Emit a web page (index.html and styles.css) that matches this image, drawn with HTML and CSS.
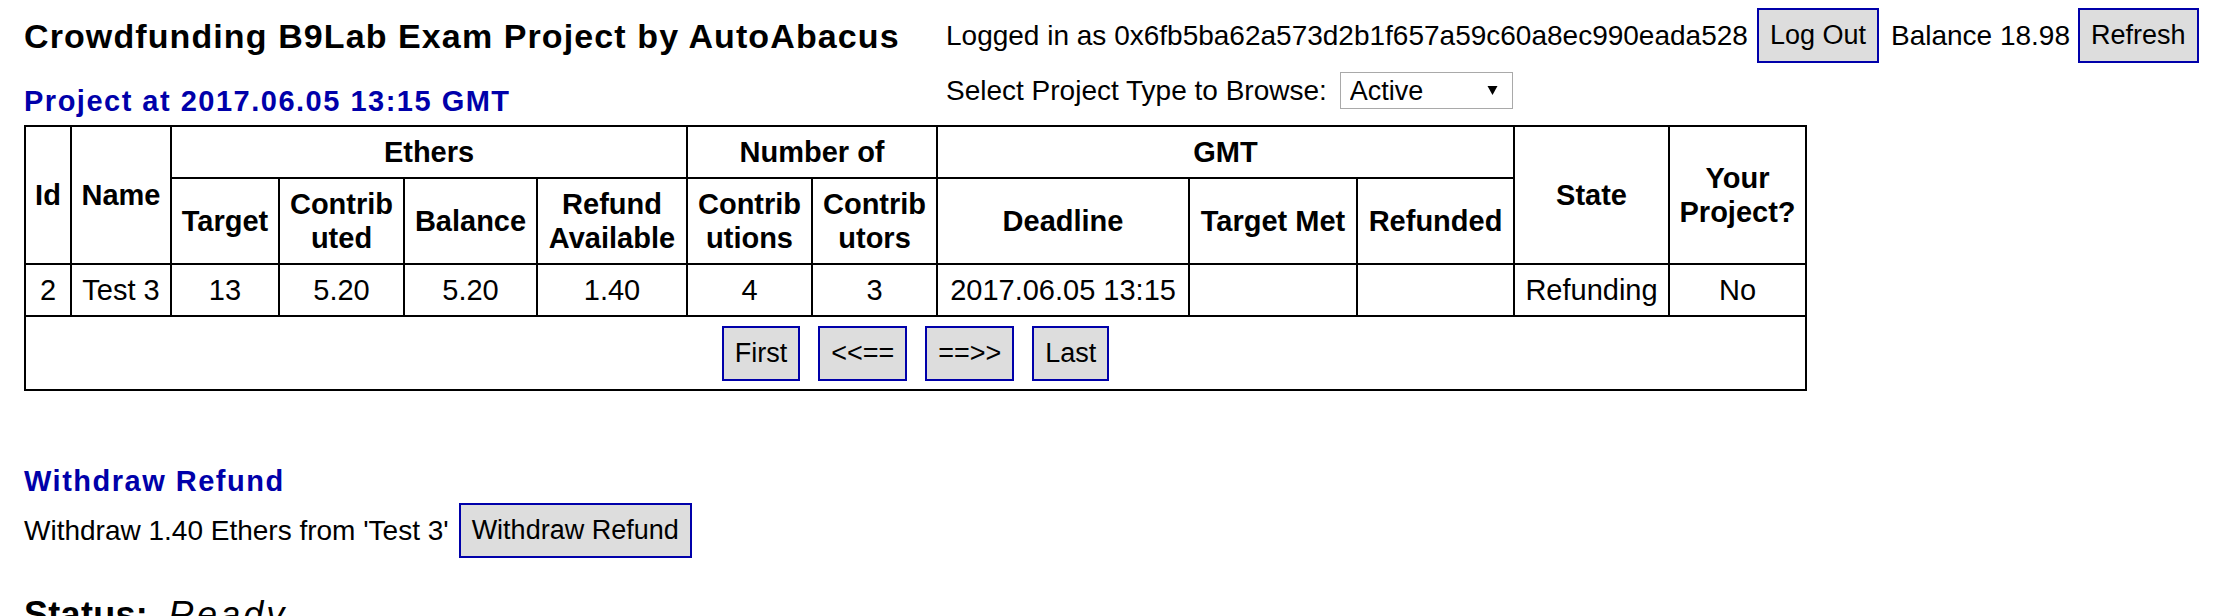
FILE: index.html
```html
<!DOCTYPE html>
<html lang="en">
<head>
<meta charset="utf-8">
<title>Crowdfunding B9Lab Exam Project by AutoAbacus</title>
<link rel="stylesheet" href="styles.css">
</head>
<body>
<div class="top">
  <div class="left">
    <h1 class="title">Crowdfunding B9Lab Exam Project by AutoAbacus</h1>
    <h2 class="subhead">Project at 2017.06.05 13:15 GMT</h2>
  </div>
  <div class="right">
    <div class="account">
      <span class="who">Logged in as 0x6fb5ba62a573d2b1f657a59c60a8ec990eada528</span>
      <button class="btn btn-logout">Log Out</button>
      <span class="balance">Balance 18.98</span>
      <button class="btn btn-refresh">Refresh</button>
    </div>
    <div class="browse">
      <label for="ptype" class="browse-label">Select Project Type to Browse:</label>
      <span class="select-wrap">
        <select id="ptype" class="select">
          <option>Active</option>
          <option>Funded</option>
          <option>Refunding</option>
        </select>
        <svg class="select-arrow" viewBox="0 0 11 11" width="11" height="11"><polygon points="0.5,1 10.5,1 5.5,10" fill="#000"/></svg>
      </span>
    </div>
  </div>
</div>

<table class="projects">
  <colgroup>
    <col class="c-id"><col class="c-name"><col class="c-target"><col class="c-contributed">
    <col class="c-balance"><col class="c-refund"><col class="c-contributions"><col class="c-contributors">
    <col class="c-deadline"><col class="c-met"><col class="c-refunded"><col class="c-state"><col class="c-yours">
  </colgroup>
  <thead>
    <tr>
      <th rowspan="2">Id</th>
      <th rowspan="2">Name</th>
      <th colspan="4">Ethers</th>
      <th colspan="2">Number of</th>
      <th colspan="3">GMT</th>
      <th rowspan="2">State</th>
      <th rowspan="2">Your<br>Project?</th>
    </tr>
    <tr>
      <th>Target</th>
      <th>Contrib<br>uted</th>
      <th>Balance</th>
      <th>Refund<br>Available</th>
      <th>Contrib<br>utions</th>
      <th>Contrib<br>utors</th>
      <th>Deadline</th>
      <th>Target Met</th>
      <th>Refunded</th>
    </tr>
  </thead>
  <tbody>
    <tr>
      <td>2</td>
      <td>Test 3</td>
      <td>13</td>
      <td>5.20</td>
      <td>5.20</td>
      <td>1.40</td>
      <td>4</td>
      <td>3</td>
      <td>2017.06.05 13:15</td>
      <td></td>
      <td></td>
      <td>Refunding</td>
      <td>No</td>
    </tr>
    <tr>
      <td colspan="13" class="paging-cell">
        <div class="paging">
          <button class="btn">First</button>
          <button class="btn">&lt;&lt;==</button>
          <button class="btn">==&gt;&gt;</button>
          <button class="btn">Last</button>
        </div>
      </td>
    </tr>
  </tbody>
</table>

<section class="withdraw">
  <h2 class="subhead withdraw-title">Withdraw Refund</h2>
  <div class="withdraw-row">
    <span>Withdraw 1.40 Ethers from 'Test 3'</span>
    <button class="btn btn-withdraw">Withdraw Refund</button>
  </div>
</section>

<div class="status"><strong class="status-label">Status:</strong><em class="status-value">Ready</em></div>
</body>
</html>
```

FILE: styles.css
```css
html, body {
  margin: 0;
  background: #fff;
}

body {
  padding: 0 24px;
  font-family: "Liberation Sans", Arial, sans-serif;
  font-size: 28px;
  line-height: 32px;
  color: #000;
}

.top {
  display: flex;
  align-items: flex-start;
  padding-top: 8px;
}

.left {
  flex: 0 0 922px;
}

.title {
  margin: 8px 0 0;
  font-size: 34px;
  line-height: 40px;
  font-weight: bold;
  letter-spacing: 1.1px;
  white-space: nowrap;
}

.subhead {
  margin: 29px 0 0;
  font-size: 29px;
  line-height: 33px;
  font-weight: bold;
  letter-spacing: 1.5px;
  color: #0000aa;
  white-space: nowrap;
}

.right {
  display: flex;
  flex-direction: column;
  gap: 9px;
}

.account {
  display: flex;
  align-items: center;
  white-space: nowrap;
}

.btn {
  font-family: "Liberation Sans", Arial, sans-serif;
  font-size: 27px;
  line-height: 31px;
  padding: 10px 11px;
  margin: 0;
  border: 2px solid #0000aa;
  border-radius: 0;
  background: #dddddd;
  color: #000;
}

.btn-logout {
  margin-left: 9px;
}

.balance {
  margin-left: 12px;
}

.btn-refresh {
  margin-left: 8px;
}

.browse {
  display: flex;
  align-items: center;
  white-space: nowrap;
}

.select-wrap {
  position: relative;
  display: block;
  margin-left: 13px;
}

.select {
  -webkit-appearance: none;
  appearance: none;
  display: block;
  width: 173px;
  height: 37px;
  margin: 0;
  padding: 0 0 0 9px;
  border: 1px solid #a9a9a9;
  border-radius: 0;
  background: #fff;
  color: #000;
  font-family: "Liberation Sans", Arial, sans-serif;
  font-size: 27px;
}

.select-arrow {
  position: absolute;
  left: 147px;
  top: 13px;
  pointer-events: none;
}

.projects {
  margin-top: 7px;
  border-collapse: collapse;
  table-layout: fixed;
  width: 1783px;
  font-size: 29px;
  line-height: 34px;
}

.projects th,
.projects td {
  border: 2px solid #000;
  padding: 8px 4px;
  text-align: center;
  vertical-align: middle;
  white-space: nowrap;
}

.projects th {
  font-weight: bold;
}

.c-id { width: 46px; }
.c-name { width: 100px; }
.c-target { width: 108px; }
.c-contributed { width: 125px; }
.c-balance { width: 133px; }
.c-refund { width: 150px; }
.c-contributions { width: 125px; }
.c-contributors { width: 125px; }
.c-deadline { width: 252px; }
.c-met { width: 168px; }
.c-refunded { width: 157px; }
.c-state { width: 155px; }
.c-yours { width: 137px; }

.projects .paging-cell {
  padding: 8px 4px;
}

.paging {
  display: flex;
  justify-content: center;
  align-items: center;
  gap: 18px;
  height: 56px;
}

.withdraw-title {
  margin-top: 74px;
}

.withdraw-row {
  display: flex;
  align-items: center;
  margin-top: 5px;
  white-space: nowrap;
}

.btn-withdraw {
  margin-left: 10px;
}

.status {
  margin-top: 37px;
  font-size: 36px;
  line-height: 40px;
  white-space: nowrap;
}

.status-label {
  font-weight: bold;
  letter-spacing: 0.3px;
}

.status-value {
  font-style: italic;
  font-weight: normal;
  letter-spacing: 3px;
  margin-left: 20px;
}
```
